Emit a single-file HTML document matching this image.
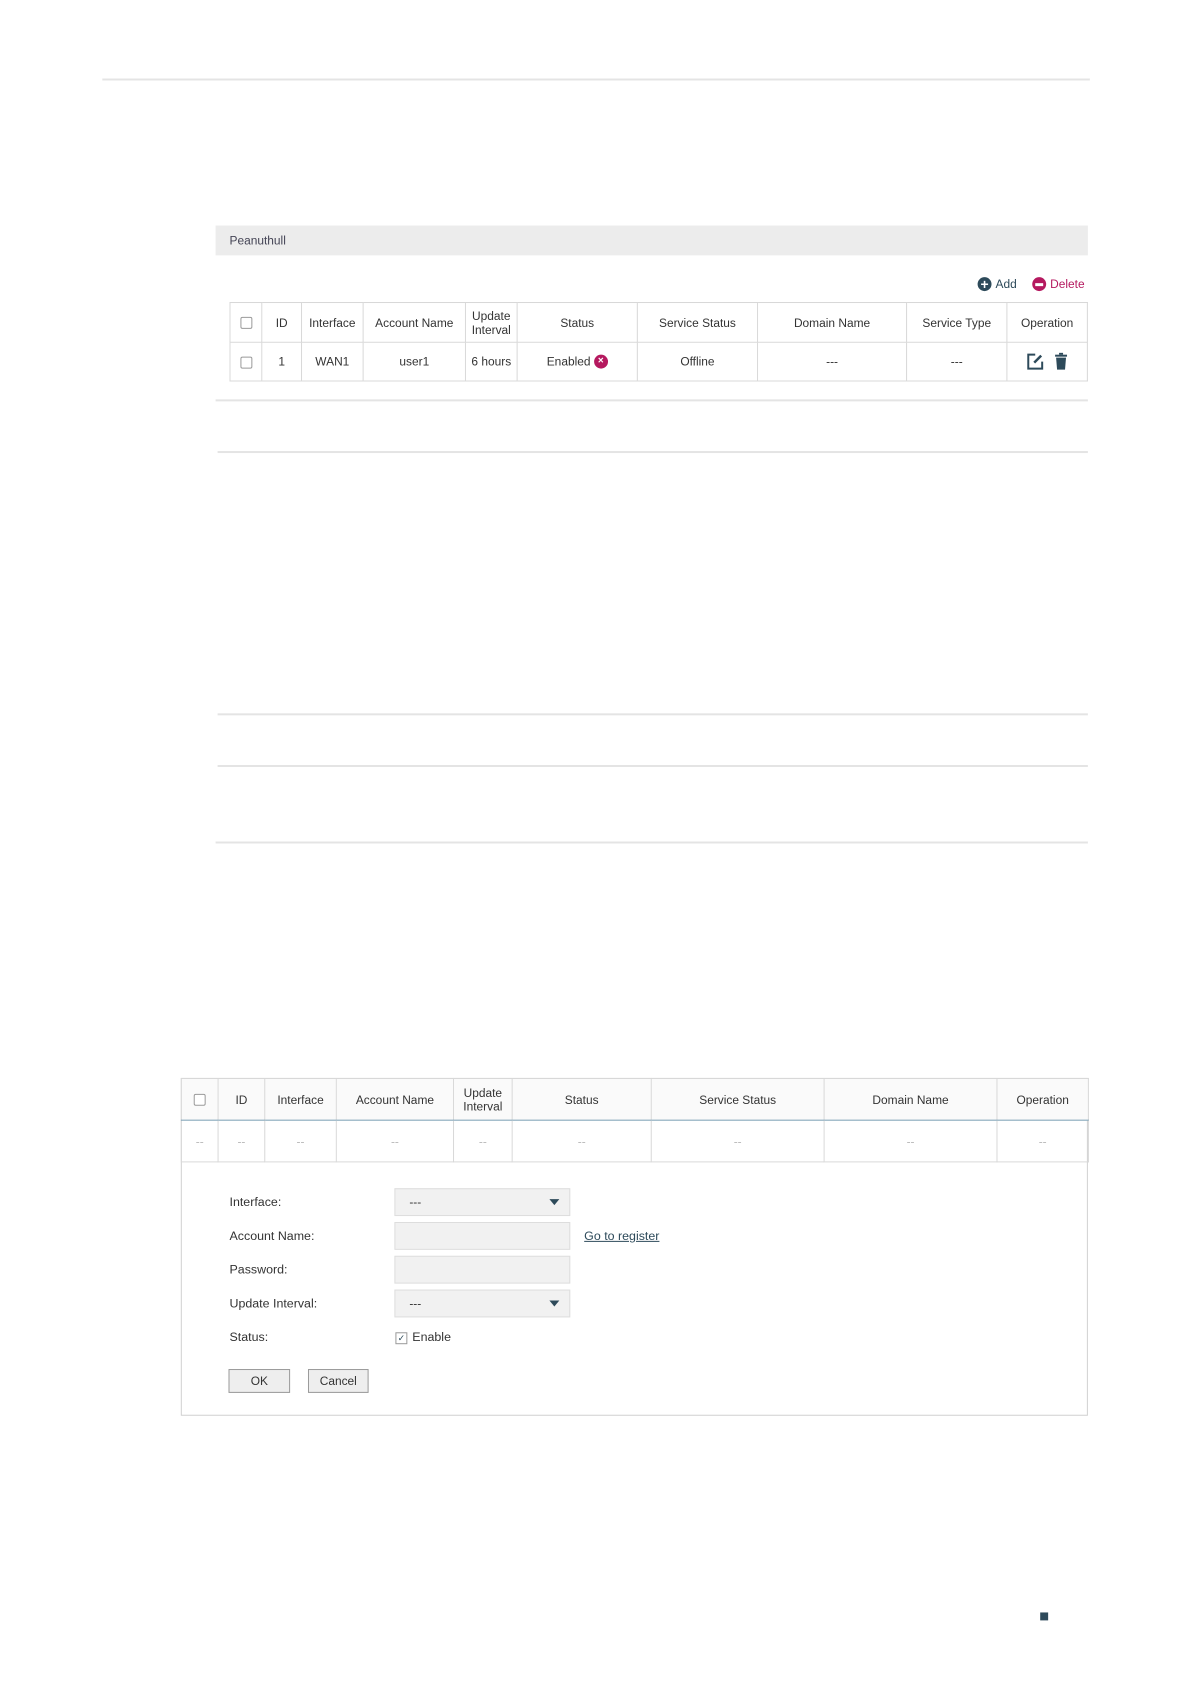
<!DOCTYPE html>
<html><head><meta charset="utf-8"><style>
body{margin:0;width:1191px;height:1684px;background:#fff;position:relative;font-family:"Liberation Sans",sans-serif;color:#333;overflow:hidden}
#w{position:absolute;left:0;top:0;width:1191px;height:1684px;transform:scale(0.9935);transform-origin:0 0}
.a{position:absolute}
.hl{position:absolute;height:2px;background:#e4e4e4}
table{border-collapse:collapse;position:absolute;font-size:12px;table-layout:fixed}
td{border:1px solid #d8d8d8;text-align:center;padding:0;color:#333}
.cb{display:inline-block;width:10px;height:10px;border:1px solid #999;border-radius:2px;background:#fff;vertical-align:middle}
.lbl{position:absolute;left:231px;font-size:12.5px;color:#333}
.inp{position:absolute;left:397px;width:177px;height:28px;background:#f1f1f1;border:1px solid #ddd;box-sizing:border-box;font-size:12px;line-height:26px;padding-left:14px}
.arr{position:absolute;right:10px;top:10px;width:0;height:0;border-left:5px solid transparent;border-right:5px solid transparent;border-top:6px solid #2d4a5a}
.btn{position:absolute;top:1378px;height:24px;border:1px solid #999;background:#eee;font-size:12px;text-align:center;line-height:22px;box-sizing:border-box}
</style></head><body><div id="w">
<div class="hl" style="left:103px;top:79px;width:994px"></div>
<div class="a" style="left:217px;top:227px;width:878px;height:30px;background:#ececec"></div>
<div class="a" style="left:231px;top:235px;font-size:12px;color:#445">Peanuthull</div>

<div class="a" style="left:984px;top:279px;width:14px;height:14px;border-radius:50%;background:#2d4a5a"></div>
<div class="a" style="left:984px;top:279px;width:14px;height:14px;color:#fff;font-size:14px;line-height:14px;text-align:center;font-weight:bold">+</div>
<div class="a" style="left:1002px;top:279px;font-size:12px;color:#2d4a5a">Add</div>
<div class="a" style="left:1039px;top:279px;width:14px;height:14px;border-radius:50%;background:#b5195f"></div>
<div class="a" style="left:1042px;top:285px;width:8px;height:3px;background:#fff"></div>
<div class="a" style="left:1057px;top:279px;font-size:12px;color:#b5195f">Delete</div>

<table style="left:231px;top:304px;width:863px">
<colgroup><col style="width:32px"><col style="width:40px"><col style="width:62px"><col style="width:103px"><col style="width:52px"><col style="width:121px"><col style="width:121px"><col style="width:150px"><col style="width:101px"><col style="width:81px"></colgroup>
<tr style="height:40px"><td><span class="cb"></span></td><td>ID</td><td>Interface</td><td>Account Name</td><td style="line-height:14px">Update<br>Interval</td><td>Status</td><td>Service Status</td><td>Domain Name</td><td>Service Type</td><td>Operation</td></tr>
<tr style="height:39px"><td><span class="cb"></span></td><td>1</td><td>WAN1</td><td>user1</td><td>6 hours</td><td>Enabled <span style="display:inline-block;width:14px;height:14px;border-radius:50%;background:#b5195f;color:#fff;font-size:10px;line-height:14px;vertical-align:middle;font-weight:bold">×</span></td><td>Offline</td><td>---</td><td>---</td><td>
<svg width="18" height="18" viewBox="0 0 18 18" style="vertical-align:middle"><path d="M9 2H2v14h14V9" fill="none" stroke="#2d4a5a" stroke-width="2"/><path d="M8 10l7-7" stroke="#2d4a5a" stroke-width="2.5"/></svg>
<svg width="14" height="18" viewBox="0 0 14 18" style="vertical-align:middle;margin-left:6px"><rect x="1" y="2" width="12" height="2" fill="#2d4a5a"/><rect x="5" y="0" width="4" height="2" fill="#2d4a5a"/><path d="M2 5h10l-1 12H3z" fill="#2d4a5a"/></svg></td></tr>
</table>

<div class="hl" style="left:217px;top:402px;width:878px"></div>
<div class="hl" style="left:219px;top:454px;width:876px"></div>
<div class="hl" style="left:219px;top:718px;width:876px"></div>
<div class="hl" style="left:219px;top:770px;width:876px"></div>
<div class="hl" style="left:217px;top:847px;width:878px"></div>

<div class="a" style="left:182px;top:1085px;width:911px;height:338px;border:1px solid #d0d0d0"></div>
<table style="left:182px;top:1085px;width:913px">
<colgroup><col style="width:37px"><col style="width:47px"><col style="width:72px"><col style="width:118px"><col style="width:59px"><col style="width:140px"><col style="width:174px"><col style="width:174px"><col style="width:92px"></colgroup>
<tr style="height:42px;background:#fafafa"><td style="border-bottom:1px solid #7a9fb5"><span class="cb"></span></td><td style="border-bottom:1px solid #7a9fb5">ID</td><td style="border-bottom:1px solid #7a9fb5">Interface</td><td style="border-bottom:1px solid #7a9fb5">Account Name</td><td style="border-bottom:1px solid #7a9fb5;line-height:14px">Update<br>Interval</td><td style="border-bottom:1px solid #7a9fb5">Status</td><td style="border-bottom:1px solid #7a9fb5">Service Status</td><td style="border-bottom:1px solid #7a9fb5">Domain Name</td><td style="border-bottom:1px solid #7a9fb5">Operation</td></tr>
<tr style="height:42px;color:#bbb"><td style="color:#bbb">--</td><td style="color:#bbb">--</td><td style="color:#bbb">--</td><td style="color:#bbb">--</td><td style="color:#bbb">--</td><td style="color:#bbb">--</td><td style="color:#bbb">--</td><td style="color:#bbb">--</td><td style="color:#bbb">--</td></tr>
</table>

<div class="lbl" style="top:1203px">Interface:</div>
<div class="lbl" style="top:1237px">Account Name:</div>
<div class="lbl" style="top:1271px">Password:</div>
<div class="lbl" style="top:1305px">Update Interval:</div>
<div class="lbl" style="top:1339px">Status:</div>
<div class="inp" style="top:1196px">---<div class="arr"></div></div>
<div class="inp" style="top:1230px"></div>
<div class="a" style="left:588px;top:1237px;font-size:12.5px;color:#2d4a5a;text-decoration:underline">Go to register</div>
<div class="inp" style="top:1264px"></div>
<div class="inp" style="top:1298px">---<div class="arr"></div></div>
<div class="a" style="left:398px;top:1341px;width:10px;height:10px;border:1px solid #999;font-size:9px;line-height:10px;text-align:center;color:#2d4a5a">✓</div>
<div class="a" style="left:415px;top:1339px;font-size:12.5px">Enable</div>
<div class="btn" style="left:230px;width:62px">OK</div>
<div class="btn" style="left:310px;width:61px">Cancel</div>

<div class="a" style="left:1047px;top:1623px;width:8px;height:8px;background:#2d4a5a"></div>
</div></body></html>
